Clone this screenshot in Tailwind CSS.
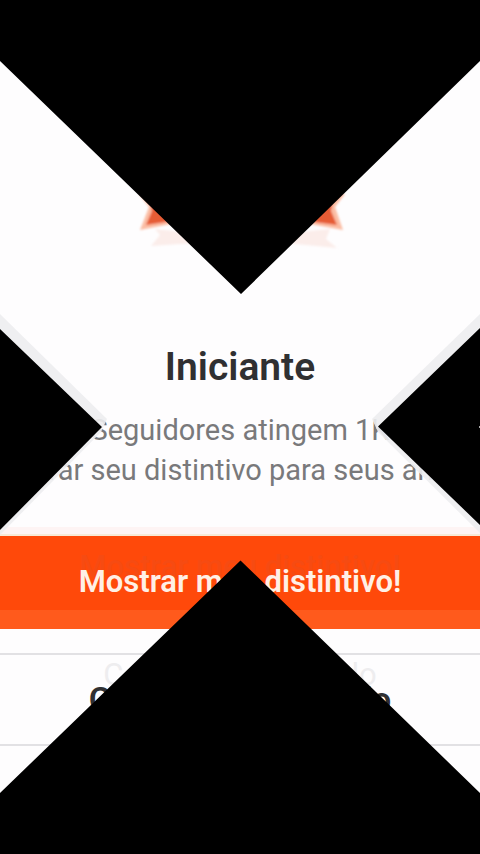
<!DOCTYPE html>
<html lang="pt">
<head>
<meta charset="utf-8">
<title>Iniciante</title>
<script src="https://cdn.jsdelivr.net/npm/@tailwindcss/browser@4"></script>
</head>
<body class="bg-[#fefdfe] font-[Roboto,'Liberation_Sans',sans-serif]">
<main class="relative flex h-[854px] w-[480px] flex-col items-center overflow-hidden whitespace-nowrap">
  <!-- Badge -->
  <svg class="h-[344px] w-[480px] shrink-0" viewBox="0 0 480 344" fill="none">
    <defs><filter id="soft"><feGaussianBlur stdDeviation="1"/></filter></defs>
    <g filter="url(#soft)">
      <path d="M155 229L202 234L195 243L151 246L160 235ZM330 229L278 234L285 243L337 248L326 239Z" fill="#fbedea"/>
      <path d="M139 194L149 207L140 230L176 223V190ZM345 194L335 207L343 230L305 223V190Z" fill="#fbbda4"/>
      <path d="M149 199L152 211L146 225L178 220V200ZM333 199L331 211L337 225L300 220V200Z" fill="#e65b35"/>
    </g>
  </svg>
  <h1 class="h-[46px] shrink-0 text-[39px] font-semibold leading-[46px] text-[#303032]">Iniciante</h1>
  <div class="mt-5 flex h-[80px] shrink-0 flex-col items-center text-[29px] leading-10 text-[#79797b]">
    <p>Seguidores atingem 1K</p>
    <p>Mostrar seu distintivo para seus amigos</p>
  </div>
  <!-- Primary action -->
  <div class="relative mt-[37px] h-[9px] w-full shrink-0 border-b-2 border-[#f7ead8] bg-[#fef4f4]"></div>
  <button class="relative flex h-[93px] w-full shrink-0 items-center justify-center border-b-[19px] border-[#ff5a1c] bg-[#ff490a] pt-[19px] text-[31px] font-semibold text-[#fff0e6]">
    <span class="absolute top-[11px] text-[31px] font-medium leading-10 text-[#f64b12]" aria-hidden="true">Mostrar meu distintivo!</span>
    <span class="relative">Mostrar meu distintivo!</span>
  </button>
  <!-- Secondary action -->
  <button class="relative mt-[24px] flex h-[93px] w-full shrink-0 items-center justify-center border-y-2 border-[#e2e1e4] text-[34px] font-semibold text-[#303032]">
    <span class="absolute top-0 text-[31px] font-normal leading-10 text-[#eeedef]" aria-hidden="true">Continue assistindo</span>
    <span class="relative">Continue assistindo</span>
  </button>
  <!-- Transition wedges -->
  <svg class="absolute inset-0 h-[854px] w-[480px]" viewBox="0 0 480 854">
    <path d="M0 314L107 419L101 432L0 535ZM480 314L372 419L378 432L480 533Z" fill="#ededef" fill-opacity=".9"/>
    <path d="M0 0H480V61L241 294L0 61ZM0 329L102 427L0 530ZM480 328L378 426.500L480 525ZM0 854V793L240.500 560.500L480 793V854Z" fill="#000"/>
    <path d="M479 426h1v2h-1z" fill="#aaa"/>
  </svg>
</main>
</body>
</html>
